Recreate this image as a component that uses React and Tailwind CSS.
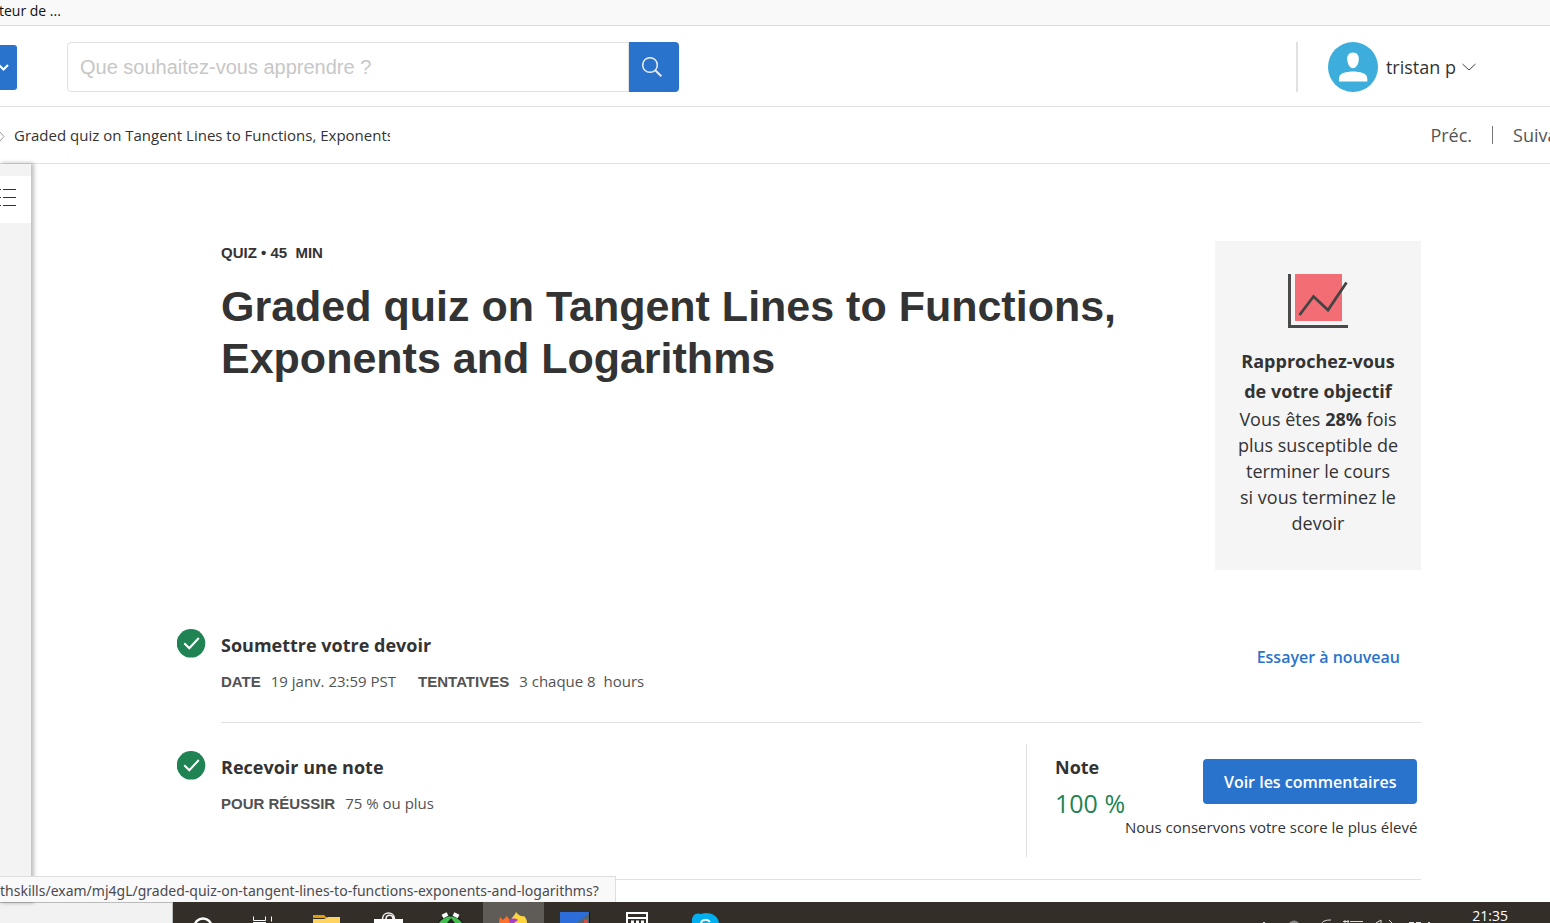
import React from "react";

function CheckIcon() {
  return (
    <svg className="block size-[29px] shrink-0" viewBox="0 0 29 29" aria-hidden="true">
      <circle cx="14" cy="14.300" r="14.300" fill="#1f8354" />
      <path d="M7.300 14.300l5 5L21.800 9" fill="none" stroke="#fff" strokeWidth="2" />
    </svg>
  );
}

function BookmarksBar() {
  return (
    <div className="flex h-[26px] items-center border-b border-[#dddddd] bg-[#f9f9fa] text-sm text-[#111111]">
      <span className="-ml-px pb-1">teur de ...</span>
    </div>
  );
}

function Header() {
  return (
    <header className="flex h-[81px] items-center border-b border-[#e1e1e1] pt-0.5">
      <button aria-label="Explorer" className="flex h-[45px] w-[17px] items-center rounded-r-[3px] bg-[#2a73cc]">
        <svg className="h-4 w-[9px]" viewBox="0 0 9 16" fill="none" aria-hidden="true">
          <path d="M-1 6l4.500 4.500L8 6" stroke="#fff" strokeWidth="2.200" />
        </svg>
      </button>
      <form className="ml-[50px] flex h-[50px] w-[612px]" onSubmit={(e) => e.preventDefault()}>
        <input
          aria-label="Que souhaitez-vous apprendre ?"
          placeholder="Que souhaitez-vous apprendre ?"
          className="min-w-0 flex-1 rounded-l-sm border border-[#e1e1e1] px-3 font-['Liberation_Sans',sans-serif] text-xl text-[#333333] outline-none placeholder:text-[#c7c7c7]"
        />
        <button aria-label="Rechercher" className="flex w-[50px] items-center justify-center rounded-r-sm bg-[#2a73cc]">
          <svg className="mr-1 size-5" viewBox="0 0 20 20" fill="none" stroke="#e8eef7" strokeWidth="1.500" aria-hidden="true">
            <circle cx="8" cy="8" r="7.300" />
            <path d="M13.200 13.200l6.200 6" strokeWidth="2" />
          </svg>
        </button>
      </form>
      <div className="ml-auto mr-[74px] flex h-[50px] items-center border-l-2 border-[#e1e1e1] pl-[30px]">
        <button className="flex items-center text-lg text-[#333333]">
          <svg className="mr-2 size-[50px]" viewBox="0 0 50 50" aria-hidden="true">
            <circle cx="25" cy="25" r="25" fill="#3daedc" />
            <path d="M25 10.500c-4 0-6 2.800-5.800 6.800.2 4.800 2.600 8.900 5.800 8.900s5.600-4.100 5.800-8.900c.2-4-1.800-6.800-5.800-6.800z" fill="#fff" />
            <path d="M11 39.500c-.2-5.500 1-7.300 4.300-8.400 6.200-2 13.200-2 19.400 0 3.300 1.100 4.900 2.900 4.600 8.400z" fill="#fff" />
          </svg>
          tristan p
          <svg className="ml-1.5 h-2 w-3.5" viewBox="0 0 14 8" fill="none" stroke="#444" aria-hidden="true">
            <path d="M.5 1L7 7l6.500-6" />
          </svg>
        </button>
      </div>
    </header>
  );
}

function Breadcrumbs() {
  return (
    <nav className="flex h-[57px] items-center overflow-hidden border-b border-[#e1e1e1]">
      <svg className="h-3 w-[5px] shrink-0" viewBox="0 0 5 12" fill="none" stroke="#999" aria-hidden="true">
        <path d="M0 3l4 4.500L0 12" />
      </svg>
      <a href="#quiz" className="ml-[9px] w-[376px] shrink-0 overflow-hidden whitespace-nowrap text-[15px] text-[#333333]">
        Graded quiz on Tangent Lines to Functions, Exponents and Logarithms
      </a>
      <div className="-mr-[25px] ml-auto flex shrink-0 items-center gap-5 text-lg text-[#555555]">
        <a href="#prev">Préc.</a>
        <span className="h-[18px] border-l border-[#757575]" />
        <a href="#next">Suivant</a>
      </div>
    </nav>
  );
}

function GoalCard() {
  return (
    <aside className="flex h-[329px] w-[206px] shrink-0 flex-col items-center bg-[#f5f5f5] px-5 pt-[33px] text-center text-[#333333]">
      <svg className="h-[54px] w-[60px]" viewBox="0 0 60 54" fill="none" aria-hidden="true">
        <path d="M7 0h47v47H7z" fill="#f36d75" />
        <path d="M1.500 0v52.500H60" stroke="#4a4a4a" strokeWidth="3" />
        <path d="M11.500 41L25.500 22.500 40 36 58.500 8.500" stroke="#444" strokeWidth="2.800" />
      </svg>
      <h2 className="mt-[18px] text-lg leading-[30px] font-bold">
        Rapprochez-vous
        <br />
        de votre objectif
      </h2>
      <p className="text-lg leading-[26px]">
        Vous êtes <strong>28%</strong> fois
        <br />
        plus susceptible de
        <br />
        terminer le cours
        <br />
        si vous terminez le
        <br />
        devoir
      </p>
    </aside>
  );
}

function Label({ children }) {
  return <dt className="font-['Liberation_Sans',sans-serif] font-bold">{children}</dt>;
}

function Steps() {
  return (
    <section className="mt-[59px]">
      <div className="flex">
        <CheckIcon />
        <div className="ml-[15px] flex h-[94px] flex-1 items-start justify-between border-b border-[#e1e1e1]">
          <div className="pt-0.5">
            <h3 className="text-lg leading-7 font-bold text-[#333333]">Soumettre votre devoir</h3>
            <dl className="mt-3 flex items-baseline gap-2.5 text-[15px] leading-5 text-[#525252]">
              <Label>DATE</Label>
              <dd className="mr-3">19 janv. 23:59 PST</dd>
              <Label>TENTATIVES</Label>
              <dd>3 chaque 8&nbsp; hours</dd>
            </dl>
          </div>
          <button className="mt-4 mr-[21px] text-base font-semibold text-[#2a73cc]">Essayer à nouveau</button>
        </div>
      </div>
      <div className="mt-[28px] flex">
        <CheckIcon />
        <div className="ml-[15px] flex h-[129px] flex-1 items-start justify-between border-b border-[#e1e1e1]">
          <div className="pt-0.5">
            <h3 className="text-lg leading-7 font-bold text-[#333333]">Recevoir une note</h3>
            <dl className="mt-3 flex items-baseline gap-2.5 text-[15px] leading-5 text-[#525252]">
              <Label>POUR RÉUSSIR</Label>
              <dd>75 % ou plus</dd>
            </dl>
          </div>
          <div className="-mt-[7px] flex h-[113px] w-[395px] justify-between border-l border-[#e1e1e1] pr-1 pl-7">
            <div className="w-[70px] shrink-0 pt-[9px] text-lg leading-7 font-bold whitespace-nowrap text-[#333333]">
              Note
              <div className="mt-1 text-[25px] leading-9 font-normal text-[#1f8354]">100 %</div>
            </div>
            <div className="flex flex-col items-end pt-[15px]">
              <button className="h-[45px] rounded-sm bg-[#2a73cc] px-[21px] text-base font-semibold text-white">
                Voir les commentaires
              </button>
              <p className="mt-[13px] text-[15px] leading-5 whitespace-nowrap text-[#333333]">Nous conservons votre score le plus élevé</p>
            </div>
          </div>
        </div>
      </div>
    </section>
  );
}

function Taskbar() {
  return (
    <footer className="flex h-[21px] shrink-0 overflow-hidden bg-[#332e28] text-white">
      <div className="w-[173px] shrink-0 border-t border-r border-[#bcbcbc] bg-[#f2f2f2]" />
      <svg className="h-[21px] w-[577px] shrink-0" viewBox="173 0 577 21" fill="none" aria-hidden="true">
        <circle cx="203" cy="25" r="8.500" stroke="#fff" strokeWidth="2.500" />
        <path d="M253.500 14.500v4h12v-4M271.500 14.500v5M253 20.500h13" stroke="#fff" />
        <path d="M313 13h11l3 3h-14z" fill="#df9d08" />
        <path d="M313 17h11l4-2h12v6h-27z" fill="#ffd45e" />
        <path d="M374 17h29v4h-29z" fill="#fff" />
        <path d="M382.500 17c0-8 12-8 12 0M386 17c0-5 7-5 7 0" stroke="#eee" strokeWidth="1.600" />
        <circle cx="450.500" cy="27" r="14" fill="#191d1b" />
        <path d="M442.500 14.500l5-2.500M458.500 14.500l-5-2.500" stroke="#fff" strokeWidth="4" />
        <path d="M439 21c3-4 7-6.500 11.500-6.500S459 17 462 21z" fill="#43bf4e" />
        <path d="M447 21l4-5 4 5z" fill="#222" />
        <path d="M483 0h61v21h-61z" fill="#5f5b57" />
        <path d="M499 21l1-6 3 3 4-4 2 3 4 4z" fill="#ff702d" />
        <path d="M511 19c0-4 4-5 5-9 3 4 6 5 8 4 2 2 3 4 3 7h-14z" fill="#ffd53b" />
        <path d="M509 18c2-2 7-2 9 0l-4 3h-4z" fill="#a83bd0" />
        <path d="M560 10h29v11h-29z" fill="#2d6dd9" />
        <path d="M576 21l6-4 7-6v10z" fill="#536670" />
        <path d="M584 18l3-1 1 4h-4z" fill="#d94a40" />
        <path d="M589.500 10v11" stroke="#111" />
        <path d="M627 21V11h20v10M627 16h20" stroke="#fff" strokeWidth="2" />
        <path d="M631 20h3M636 20h3M641 20h3" stroke="#fff" strokeWidth="3" />
        <path d="M692 21c-1-8 4-11 9-9 8-3 17 1 18 9z" fill="#00aff0" />
        <path d="M701 21c1-4 7-4 9-1" stroke="#fff" strokeWidth="2" />
      </svg>
      <svg className="ml-auto h-[21px] w-[190px] shrink-0" viewBox="1250 0 190 21" fill="none" stroke="#ddd" aria-hidden="true">
        <path d="M1264 20.500h2" />
        <circle cx="1295" cy="24" r="5.500" fill="#888" stroke="none" />
        <path d="M1323 21c1-2 4-3 9-3M1346 18v3M1349 18v3M1344 19.500h6M1351 19.500h13M1377 21l5-3v3M1390 18l3 3M1410 20.500h5M1417 20.500h5M1429 20.500h2" />
      </svg>
      <time className="mr-[42px] ml-[33px] text-sm leading-[28px]">21:35</time>
    </footer>
  );
}

export default function App() {
  return (
    <div className="flex min-h-screen flex-col overflow-hidden bg-white font-['Open_Sans',sans-serif]">
      <BookmarksBar />
      <Header />
      <Breadcrumbs />
      <div className="relative flex flex-1">
        <div className="w-[31px] shrink-0 bg-[#f3f3f3] pt-3 shadow-[2px_0_4px_1px_rgba(0,0,0,0.25)]">
          <button aria-label="Menu" className="flex h-[47px] w-full items-center bg-white">
            <svg className="mb-1.5 h-[18px] w-4" viewBox="0 0 16 18" stroke="#333" aria-hidden="true">
              <path d="M3 1.500h13M3 9.500h13M3 17.500h13M0 1.500h1M0 9.500h1M0 17.500h1" />
            </svg>
          </button>
        </div>
        <main className="flex-1 pt-[77px] pr-[129px] pb-[22px] pl-[146px]">
          <div className="flex justify-between pl-11">
            <div className="font-['Liberation_Sans',sans-serif] font-bold text-[#333333]">
              <p className="text-[15px] leading-6">QUIZ • 45&nbsp; MIN</p>
              <h1 className="mt-[15px] text-[43px] leading-[52px]">
                Graded quiz on Tangent Lines to Functions,
                <br />
                Exponents and Logarithms
              </h1>
            </div>
            <GoalCard />
          </div>
          <Steps />
        </main>
        <div className="absolute bottom-0 left-0 flex h-[26px] w-[616px] items-center border-t border-r border-[#dddddd] bg-[#f9f9fa] pt-0.5 font-['Noto_Sans',sans-serif] text-sm whitespace-nowrap text-[#4a4a4f]">
          thskills/exam/mj4gL/graded-quiz-on-tangent-lines-to-functions-exponents-and-logarithms?
        </div>
      </div>
      <Taskbar />
    </div>
  );
}
